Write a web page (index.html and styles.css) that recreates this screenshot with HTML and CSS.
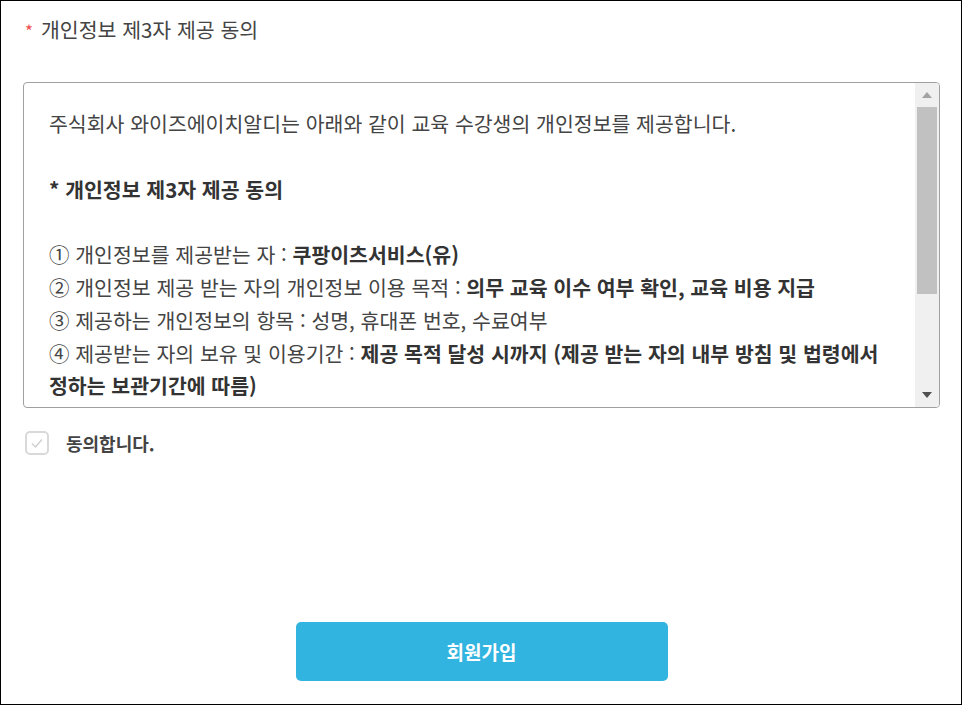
FILE: index.html
```html
<!DOCTYPE html>
<html lang="ko">
<head>
  <meta charset="UTF-8">
  <title>개인정보 제3자 제공 동의</title>
  <link rel="stylesheet" href="styles.css">
</head>
<body>
  <div class="frame">
    <h2 class="agree-title"><span class="req">*</span>개인정보 제3자 제공 동의</h2>

    <div class="terms-box">
      <div class="terms-text">
        <p>주식회사 와이즈에이치알디는 아래와 같이 교육 수강생의 개인정보를 제공합니다.</p>
        <p class="blank">&nbsp;</p>
        <p><b>* 개인정보 제3자 제공 동의</b></p>
        <p class="blank">&nbsp;</p>
        <p>① 개인정보를 제공받는 자 : <b>쿠팡이츠서비스(유)</b></p>
        <p>② 개인정보 제공 받는 자의 개인정보 이용 목적 : <b>의무 교육 이수 여부 확인, 교육 비용 지급</b></p>
        <p>③ 제공하는 개인정보의 항목 : 성명, 휴대폰 번호, 수료여부</p>
        <p>④ 제공받는 자의 보유 및 이용기간 : <b>제공 목적 달성 시까지 (제공 받는 자의 내부 방침 및 법령에서 정하는 보관기간에 따름)</b></p>
        <p class="blank">&nbsp;</p>
        <p>※ 위 개인정보 제3자 제공에 대한 동의를 거부할 권리가 있으며, 동의를 거부할 경우 교육 수강이 제한될 수 있습니다.</p>
      </div>
      <div class="scrollbar">
        <span class="arrow up"></span>
        <div class="track"><div class="thumb"></div></div>
        <span class="arrow down"></span>
      </div>
    </div>

    <label class="agree-check">
      <span class="box">
        <svg width="16" height="16" viewBox="0 0 16 16"><path d="M3 8.5 L6.5 12 L13 4.5" fill="none" stroke="#d0d0d0" stroke-width="1.5"/></svg>
      </span>
      동의합니다.
    </label>

    <div class="actions">
      <button class="join-btn">회원가입</button>
    </div>
  </div>
</body>
</html>
```

FILE: styles.css
```css
* {
  box-sizing: border-box;
}

body {
  margin: 0;
  font-family: "Noto Sans CJK KR", "Noto Sans", sans-serif;
  color: #333;
  background: #fff;
}

.frame {
  height: 705px;
  border: 1px solid #000;
  padding: 14px 21px 0 22px;
  display: flex;
  flex-direction: column;
}

.agree-title {
  margin: 0;
  font-size: 20.5px;
  font-weight: 400;
  color: #444;
  line-height: 28px;
}

.req {
  color: #f05050;
  font-size: 17px;
  margin: 0 8px 0 2px;
}

.terms-box {
  margin-top: 37px;
  height: 326px;
  border: 1px solid #a0a0a0;
  border-radius: 4px;
  display: flex;
  overflow: hidden;
}

.terms-text {
  flex: 1;
  padding: 24px 36px 0 25px;
  font-size: 20.5px;
  line-height: 32.8px;
  color: #444;
  overflow: hidden;
}

.terms-text p {
  margin: 0;
}

.terms-text b {
  color: #333;
}

.scrollbar {
  width: 24px;
  background: #f0f0f0;
  display: flex;
  flex-direction: column;
  align-items: center;
}

.arrow {
  width: 0;
  height: 0;
  border-left: 5px solid transparent;
  border-right: 5px solid transparent;
  margin: 9px 0;
}

.arrow.up {
  border-bottom: 6px solid #a3a3a3;
}

.arrow.down {
  border-top: 6px solid #505050;
}

.track {
  flex: 1;
  width: 100%;
  padding: 0 2px;
}

.thumb {
  height: 187px;
  background: #c1c1c1;
}

.agree-check {
  display: flex;
  align-items: center;
  gap: 17px;
  margin: 22px 0 0 2px;
  font-size: 18px;
  font-weight: 700;
  color: #444;
}

.box {
  width: 24px;
  height: 24px;
  border: 2px solid #d9d9d9;
  border-radius: 5px;
  display: flex;
  align-items: center;
  justify-content: center;
}

.actions {
  display: flex;
  justify-content: center;
  margin-top: 166px;
}

.join-btn {
  width: 372px;
  height: 59px;
  border: none;
  border-radius: 5px;
  background: #32b4e0;
  color: #fff;
  font-family: inherit;
  font-size: 19px;
  font-weight: 700;
  cursor: pointer;
}
```
